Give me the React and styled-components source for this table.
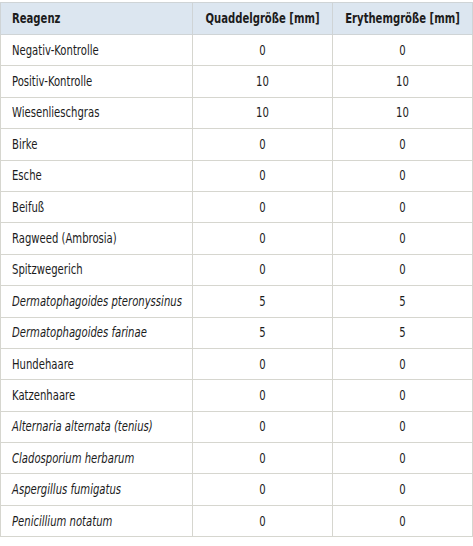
import React from 'react'
import styled, { createGlobalStyle } from 'styled-components'

const GlobalStyle = createGlobalStyle`
  body {
    margin: 0;
    background: #fff;
    font-family: "DejaVu Sans Condensed", "DejaVu Sans", sans-serif;
    color: #1c1c1c;
  }
`

const Wrap = styled.div`
  padding-top: 2px;
  width: 473px;
`

const Table = styled.table`
  width: 472px;
  border-collapse: collapse;
  border: 1px solid #b9b9b0;
  table-layout: fixed;
  font-size: 11.2px;
`

const HeadCell = styled.th`
  background: #dce6f0;
  font-weight: bold;
  height: 31px;
  padding: 0 11px;
  border: 1px solid #cfd4d6;
  white-space: nowrap;
  text-align: ${(p) => (p.$center ? 'center' : 'left')};
`

const Cell = styled.td`
  height: 30.4px;
  padding: 0 11px;
  border: 1px solid #d6d6cf;
  white-space: nowrap;
  text-align: ${(p) => (p.$center ? 'center' : 'left')};
  font-style: ${(p) => (p.$italic ? 'italic' : 'normal')};
`

// the source face is a tall condensed gothic; stretch the narrow face upwards
const Tall = styled.span`
  display: inline-block;
  transform: scaleY(1.28);
`

const rows = [
  ['Negativ-Kontrolle', 0, 0],
  ['Positiv-Kontrolle', 10, 10],
  ['Wiesenlieschgras', 10, 10],
  ['Birke', 0, 0],
  ['Esche', 0, 0],
  ['Beifuß', 0, 0],
  ['Ragweed (Ambrosia)', 0, 0],
  ['Spitzwegerich', 0, 0],
  ['Dermatophagoides pteronyssinus', 5, 5, true],
  ['Dermatophagoides farinae', 5, 5, true],
  ['Hundehaare', 0, 0],
  ['Katzenhaare', 0, 0],
  ['Alternaria alternata (tenius)', 0, 0, true],
  ['Cladosporium herbarum', 0, 0, true],
  ['Aspergillus fumigatus', 0, 0, true],
  ['Penicillium notatum', 0, 0, true],
]

export default function App() {
  return (
    <Wrap>
      <GlobalStyle />
      <Table>
        <colgroup>
          <col style={{ width: 192 }} />
          <col style={{ width: 140 }} />
          <col style={{ width: 140 }} />
        </colgroup>
        <thead>
          <tr>
            <HeadCell><Tall>Reagenz</Tall></HeadCell>
            <HeadCell $center><Tall>Quaddelgröße [mm]</Tall></HeadCell>
            <HeadCell $center><Tall>Erythemgröße [mm]</Tall></HeadCell>
          </tr>
        </thead>
        <tbody>
          {rows.map(([name, q, e, italic]) => (
            <tr key={name}>
              <Cell $italic={italic}><Tall>{name}</Tall></Cell>
              <Cell $center><Tall>{q}</Tall></Cell>
              <Cell $center><Tall>{e}</Tall></Cell>
            </tr>
          ))}
        </tbody>
      </Table>
    </Wrap>
  )
}
